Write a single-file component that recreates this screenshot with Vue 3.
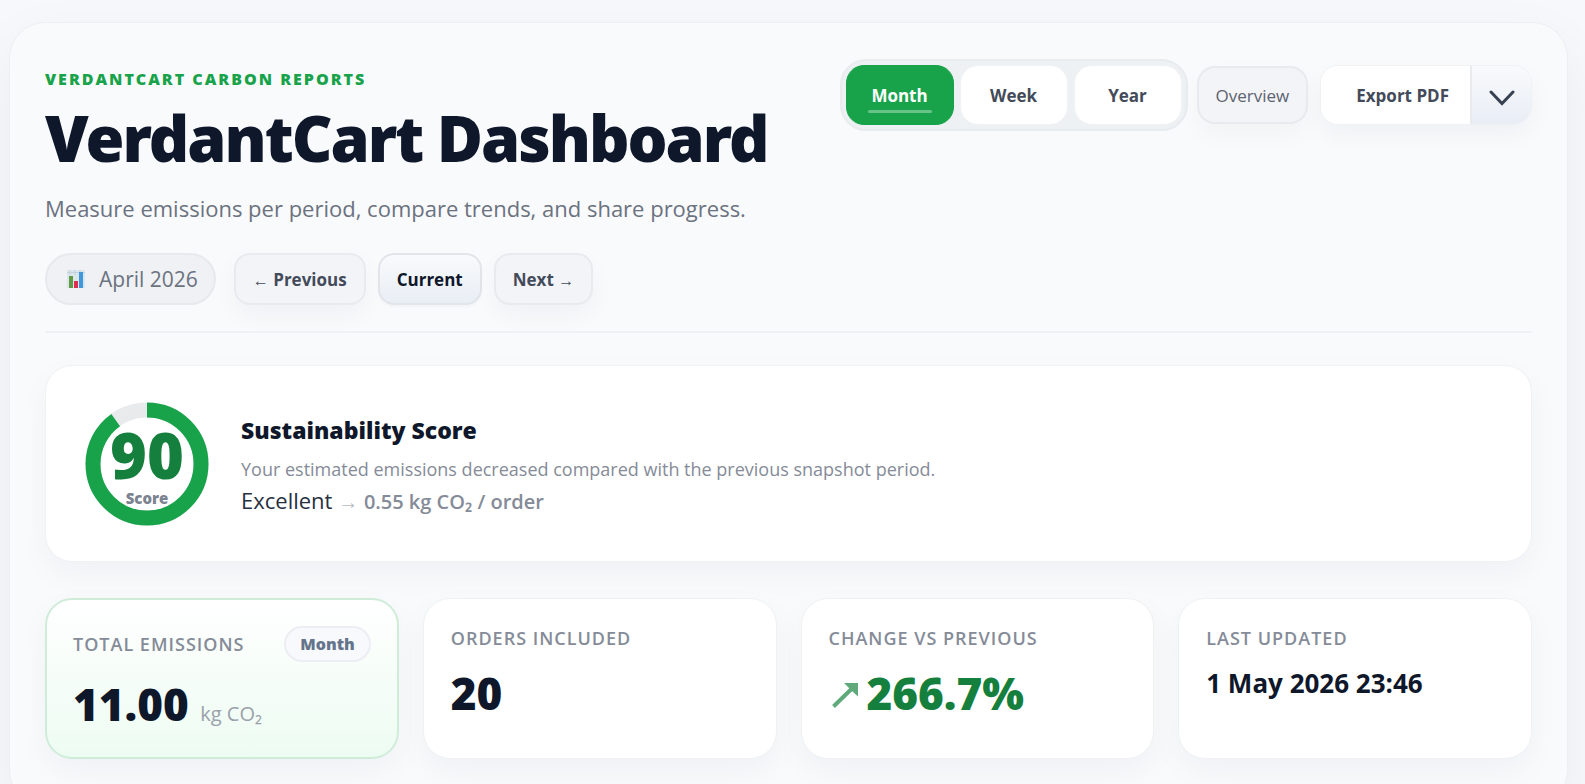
<script setup>
import { ref, computed } from 'vue'

const periods = ['Month', 'Week', 'Year']
const period = ref('Month')
const score = ref(90)

const radius = 54
const circumference = 2 * Math.PI * radius
const dash = computed(() => `${(circumference * score.value) / 100} ${circumference}`)
</script>

<template>
  <div class="page">
    <main class="shell">
      <header class="head">
        <div class="intro">
          <p class="eyebrow">VERDANTCART CARBON REPORTS</p>
          <h1 class="title">VerdantCart Dashboard</h1>
          <p class="subtitle">Measure emissions per period, compare trends, and share progress.</p>
          <nav class="nav" aria-label="Reporting period">
            <span class="chip">
              <svg class="chart" viewBox="0 0 18 18" aria-hidden="true">
                <rect width="18" height="18" rx="1" fill="#dbe6ed" />
                <path d="M0 2.500H18M3 0V5M8 0V5M13 0V5" stroke="#c3d3dd" stroke-width="1" />
                <rect x="2" y="6" width="4" height="12" fill="#5f9a45" />
                <rect x="7" y="11" width="4" height="7" fill="#dd2e52" />
                <rect x="12" y="2" width="4" height="16" fill="#3f97dc" />
              </svg>
              April 2026
            </span>
            <button type="button" class="step"><span class="arrow">←</span> Previous</button>
            <button type="button" class="step current">Current</button>
            <button type="button" class="step">Next <span class="arrow">→</span></button>
          </nav>
        </div>
        <div class="controls">
          <div class="segments" role="group" aria-label="Period length">
            <button
              v-for="p in periods"
              :key="p"
              type="button"
              class="segment"
              :class="{ active: p === period }"
              :aria-pressed="p === period"
              @click="period = p"
            >{{ p }}</button>
          </div>
          <button type="button" class="overview">Overview</button>
          <div class="export">
            <button type="button" class="export-main">Export PDF</button>
            <button type="button" class="export-more" aria-label="More export options">
              <svg viewBox="0 0 26 16" aria-hidden="true">
                <path d="M2 2L13 13.500L24 2" fill="none" stroke="#374151" stroke-width="3" stroke-linecap="round" stroke-linejoin="miter" />
              </svg>
            </button>
          </div>
        </div>
      </header>

      <section class="score">
        <div class="ring">
          <svg viewBox="0 0 124 124" aria-hidden="true">
            <circle cx="62" cy="62" :r="radius" fill="none" stroke="#e9eaec" stroke-width="15" />
            <circle cx="62" cy="62" :r="radius" fill="none" stroke="#18a34a" stroke-width="15" :stroke-dasharray="dash" transform="rotate(-90 62 62)" />
          </svg>
          <div class="ring-text">
            <strong>{{ score }}</strong>
            <span>Score</span>
          </div>
        </div>
        <div class="score-body">
          <h2>Sustainability Score</h2>
          <p class="score-note">Your estimated emissions decreased compared with the previous snapshot period.</p>
          <p class="rating">Excellent <span class="arrow">→</span> <b>0.55 kg CO₂ / order</b></p>
        </div>
      </section>

      <section class="cards">
        <article class="card featured">
          <div class="card-head">
            <h3>TOTAL EMISSIONS</h3>
            <span class="tag">Month</span>
          </div>
          <p class="value">11.00 <small>kg CO₂</small></p>
        </article>
        <article class="card">
          <h3>ORDERS INCLUDED</h3>
          <p class="value">20</p>
        </article>
        <article class="card">
          <h3>CHANGE VS PREVIOUS</h3>
          <p class="value up">
            <svg class="trend" viewBox="0 0 26 25" role="img" aria-label="Up">
              <path d="M1.500 23.500L21 4.500" stroke="#5fa97b" stroke-width="4" fill="none" />
              <path d="M12 0H26V13.500L20 8L17.500 5.500Z" fill="#5fa97b" />
            </svg>
            266.7%
          </p>
        </article>
        <article class="card">
          <h3>LAST UPDATED</h3>
          <p class="date">1 May 2026 23:46</p>
        </article>
      </section>
    </main>
  </div>
</template>

<style>
body {
  margin: 0;
  background: #f6f8fc;
}
</style>

<style scoped>
.page {
  padding: 22px 17px 24px 9px;
  font-family: "Open Sans", "Noto Sans", sans-serif;
  color: #0f172a;
}
.page * {
  box-sizing: border-box;
}
h1, h2, h3, p {
  margin: 0;
}
button {
  font-family: inherit;
  cursor: pointer;
}
.shell {
  min-height: 100vh;
  padding: 36px 35px;
  border: 1px solid #edeff2;
  border-radius: 36px;
  background: #f9fafc;
  box-shadow: 0 20px 60px rgba(15, 23, 42, 0.05);
}
.head {
  display: flex;
  justify-content: space-between;
  align-items: flex-start;
  padding-bottom: 26px;
  border-bottom: 2px solid #eff1f4;
}
.intro {
  padding-top: 8px;
}
.eyebrow {
  color: #18a34a;
  font-size: 16px;
  line-height: 24px;
  font-weight: 800;
  letter-spacing: 2px;
}
.title {
  margin-top: 11px;
  font-family: "Noto Sans", "Open Sans", sans-serif;
  font-size: 63px;
  line-height: 72px;
  font-weight: 900;
  letter-spacing: -2px;
}
.subtitle {
  margin-top: 16px;
  color: #6b7280;
  font-size: 22px;
  line-height: 36px;
}
.nav {
  display: flex;
  gap: 12px;
  margin-top: 27px;
}
.chip {
  display: flex;
  align-items: center;
  gap: 14px;
  height: 52px;
  margin-right: 6px;
  padding: 0 16px 0 20px;
  border: 2px solid #e7e9ec;
  border-radius: 26px;
  background: #eff1f4;
  color: #6b7280;
  font-size: 21px;
  font-weight: 500;
}
.chart {
  width: 18px;
  height: 18px;
}
.step {
  height: 52px;
  padding: 0 17px;
  border: 2px solid #e8eaee;
  border-radius: 16px;
  background: #f3f4f8;
  box-shadow: 0 10px 24px rgba(15, 23, 42, 0.04);
  color: #434b5a;
  font-size: 17px;
  font-weight: 700;
}
.current {
  border-color: #e1e5ea;
  background: linear-gradient(#f8fafc, #e9eef5);
  box-shadow: 0 2px 3px rgba(15, 23, 42, 0.03);
  color: #0f172a;
}
.arrow {
  font-family: "Liberation Sans", sans-serif;
  font-size: 16px;
  line-height: 1;
  font-weight: 400;
}
.controls {
  display: flex;
  align-items: center;
}
.segments {
  display: flex;
  gap: 6px;
  padding: 4px;
  border: 2px solid #e9ecef;
  border-radius: 26px;
  background: #eef1f4;
}
.segment {
  position: relative;
  width: 108px;
  height: 60px;
  border: 1px solid #f0f2f4;
  border-radius: 18px;
  background: #fff;
  color: #434b5a;
  font-size: 17px;
  font-weight: 700;
}
.active {
  border-color: #18a34a;
  background: #18a34a;
  color: #fff;
}
.active::after {
  content: "";
  position: absolute;
  right: 21px;
  bottom: 11px;
  left: 21px;
  height: 3px;
  border-radius: 2px;
  background: rgba(255, 255, 255, 0.35);
}
.overview {
  height: 58px;
  margin: 0 12px 0 9px;
  padding: 0 17px;
  border: 2px solid #e8eaee;
  border-radius: 18px;
  background: #f3f4f8;
  box-shadow: 0 10px 24px rgba(15, 23, 42, 0.03);
  color: #5b6270;
  font-size: 17px;
}
.export {
  display: flex;
  height: 60px;
  border: 1px solid #eff1f3;
  border-radius: 18px;
  overflow: hidden;
  box-shadow: 0 10px 24px rgba(15, 23, 42, 0.04);
}
.export-main {
  padding: 0 21px 0 35px;
  border: 0;
  background: #fff;
  color: #434b5a;
  font-size: 17px;
  font-weight: 700;
}
.export-more {
  display: flex;
  align-items: center;
  justify-content: center;
  width: 61px;
  padding: 6px 0 0;
  border: 0;
  border-left: 2px solid #e8eaee;
  background: linear-gradient(#f8fafc, #e9edf5);
}
.export-more svg {
  width: 26px;
  height: 16px;
}
.score {
  display: flex;
  align-items: center;
  gap: 32px;
  min-height: 197px;
  margin-top: 32px;
  padding: 24px 39px;
  border: 1px solid #eff1f3;
  border-radius: 27px;
  background: #fff;
  box-shadow: 0 12px 32px rgba(15, 23, 42, 0.04);
}
.ring {
  position: relative;
  width: 124px;
  height: 124px;
}
.ring svg {
  display: block;
  width: 100%;
}
.ring-text {
  position: absolute;
  inset: 0;
  display: flex;
  flex-direction: column;
  align-items: center;
  padding-top: 22px;
}
.ring-text strong {
  color: #15803d;
  font-family: "Noto Sans", "Open Sans", sans-serif;
  font-size: 63px;
  line-height: 62px;
  font-weight: 900;
}
.ring-text span {
  color: #7b8290;
  font-size: 15px;
  line-height: 24px;
  font-weight: 800;
}
.score-body {
  padding-top: 2px;
}
.score-body h2 {
  font-size: 23px;
  line-height: 32px;
  font-weight: 800;
}
.score-note {
  margin-top: 8px;
  color: #858b98;
  font-size: 18px;
  line-height: 30px;
}
.rating {
  color: #27303f;
  font-size: 22px;
  line-height: 32px;
}
.rating b {
  color: #858b98;
  font-size: 20px;
  line-height: 1;
  font-weight: 600;
}
.rating .arrow {
  color: #b6bac2;
  font-size: 20px;
}
.cards {
  display: grid;
  grid-template-columns: repeat(4, 1fr);
  gap: 24px;
  margin-top: 36px;
}
.card {
  min-height: 161px;
  padding: 26px 27px 20px;
  border: 1px solid #eff1f3;
  border-radius: 27px;
  background: #fff;
  box-shadow: 0 12px 32px rgba(15, 23, 42, 0.04);
}
.featured {
  padding: 26px 26px 18px;
  border: 2px solid #cfecd9;
  background: linear-gradient(#fff, #edfcf2);
}
.card-head {
  display: flex;
  align-items: center;
  justify-content: space-between;
}
.card h3 {
  color: #858b98;
  font-size: 18px;
  line-height: 26px;
  font-weight: 600;
  letter-spacing: 1px;
}
.tag {
  padding: 0 14px;
  border: 2px solid #eceef4;
  border-radius: 18px;
  background: #f8f9fc;
  color: #64748b;
  font-size: 16px;
  line-height: 32px;
  font-weight: 800;
}
.value {
  margin-top: 12px;
  font-size: 44px;
  line-height: 60px;
  font-weight: 800;
}
.value small {
  color: #9aa1ac;
  font-size: 20px;
  line-height: 1;
  font-weight: 400;
}
.up {
  display: flex;
  align-items: center;
  gap: 9px;
  padding-left: 3px;
  color: #15803d;
}
.trend {
  width: 26px;
  height: 25px;
  margin-top: 4px;
}
.date {
  margin-top: 14px;
  font-size: 26px;
  line-height: 36px;
  font-weight: 700;
}
</style>
